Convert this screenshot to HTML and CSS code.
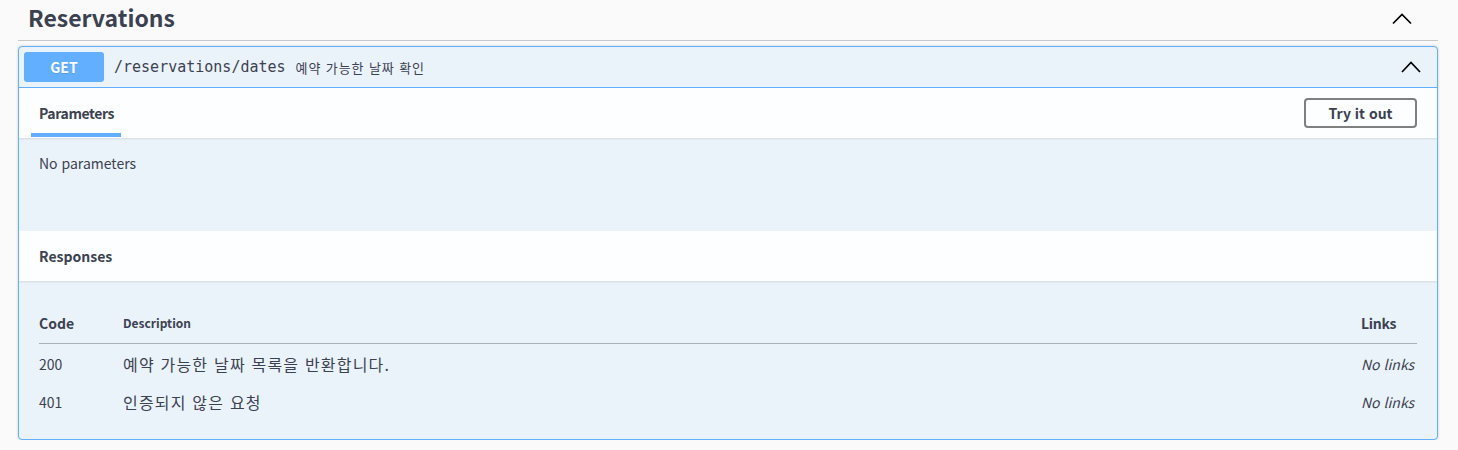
FILE: index.html
```html
<!DOCTYPE html>
<html lang="ko">
<head>
<meta charset="utf-8">
<title>Reservations</title>
<link rel="stylesheet" href="styles.css">
</head>
<body>
<div class="wrap">
  <section class="tag-section">
    <h3 class="tag-heading">
      <span class="tag-title">Reservations</span>
      <svg class="chev chev-tag" viewBox="0 0 20 20" width="20" height="20"><polyline points="1,14.5 10,5.5 19,14.5" fill="none" stroke="#000" stroke-width="1.7"/></svg>
    </h3>
    <div class="opblock">
      <div class="summary">
        <span class="method">GET</span>
        <span class="path">/reservations/dates</span>
        <span class="summary-desc">예약 가능한 날짜 확인</span>
        <svg class="chev chev-op" viewBox="0 0 20 20" width="20" height="20"><polyline points="1,15 10,5.5 19,15" fill="none" stroke="#000" stroke-width="1.7"/></svg>
      </div>
      <div class="section-header">
        <div class="tab">Parameters</div>
        <button class="try-out">Try it out</button>
      </div>
      <div class="params-body">
        <p class="no-params">No parameters</p>
      </div>
      <div class="section-header">
        <h4 class="resp-title">Responses</h4>
      </div>
      <div class="responses-inner">
        <table class="responses-table">
          <thead>
            <tr>
              <th class="col-code">Code</th>
              <th class="col-desc">Description</th>
              <th class="col-links">Links</th>
            </tr>
          </thead>
          <tbody>
            <tr>
              <td class="code">200</td>
              <td class="desc">예약 가능한 날짜 목록을 반환합니다.</td>
              <td class="links">No links</td>
            </tr>
            <tr>
              <td class="code">401</td>
              <td class="desc">인증되지 않은 요청</td>
              <td class="links">No links</td>
            </tr>
          </tbody>
        </table>
      </div>
    </div>
  </section>
</div>
</body>
</html>
```

FILE: styles.css
```css
* { box-sizing: border-box; }

html, body {
  margin: 0;
  padding: 0;
  background: #fafafa;
}

body {
  font-family: "Noto Sans CJK KR", "Noto Sans", sans-serif;
  color: #3b4151;
}

.wrap {
  padding: 0 20px 0 18px;
}

.tag-heading {
  margin: 0;
  height: 41px;
  display: flex;
  align-items: center;
  justify-content: space-between;
  padding: 0 26px 6px 10px;
  border-bottom: 1px solid #c6c8cc;
  font-size: 23px;
  line-height: 30px;
  font-weight: 700;
  color: #3b4151;
}

.chev {
  display: block;
  flex: none;
}

.chev-tag {
  margin-top: 4px;
}

.opblock {
  margin-top: 5px;
  border: 1px solid #61affe;
  border-radius: 4px;
  background: #ebf3fa;
  box-shadow: 0 0 3px rgba(0, 0, 0, 0.19);
  overflow: hidden;
}

.summary {
  display: flex;
  align-items: center;
  padding: 5px;
  border-bottom: 1px solid #61affe;
}

.method {
  width: 80px;
  height: 30px;
  line-height: 30px;
  text-align: center;
  background: #61affe;
  color: #fff;
  font-size: 14px;
  font-weight: 700;
  border-radius: 3px;
  text-shadow: 0 1px 0 rgba(0, 0, 0, 0.1);
}

.path {
  padding: 0 10px;
  font-family: "DejaVu Sans Mono", "Liberation Mono", monospace;
  font-size: 15px;
  color: #3b4151;
}

.summary-desc {
  flex: 1;
  font-size: 13px;
  letter-spacing: 0.9px;
  color: #3b4151;
}

.chev-op {
  margin-right: 11px;
}

.section-header {
  height: 50px;
  display: flex;
  align-items: center;
  justify-content: space-between;
  padding: 0 20px;
  background: rgba(255, 255, 255, 0.85);
  box-shadow: 0 1px 2px rgba(0, 0, 0, 0.1);
  position: relative;
}

.tab {
  position: relative;
  height: 50px;
  display: flex;
  align-items: center;
  font-size: 14px;
  font-weight: 700;
  letter-spacing: -0.4px;
}

.tab::after {
  content: "";
  position: absolute;
  left: -8px;
  right: -7px;
  bottom: 1px;
  height: 4px;
  background: #61affe;
}

.try-out {
  width: 113px;
  height: 30px;
  border: 2px solid #808080;
  border-radius: 4px;
  background: transparent;
  font-family: inherit;
  font-size: 14px;
  font-weight: 700;
  color: #3b4151;
  padding: 0;
}

.params-body {
  height: 93px;
  padding: 15px 20px;
}

.no-params {
  margin: 0;
  font-size: 14px;
  line-height: 20px;
}

.resp-title {
  margin: 0;
  font-size: 14px;
  font-weight: 700;
}

.responses-inner {
  padding: 20px 20px 19px;
}

.responses-table {
  width: 100%;
  border-collapse: collapse;
}

.responses-table th {
  text-align: left;
  padding: 12px 0 10px;
  line-height: 20px;
  font-weight: 700;
  border-bottom: 1px solid #aab0bb;
  font-size: 14px;
}

.responses-table th.col-desc {
  font-size: 12px;
}

.col-code {
  width: 84px;
}

.col-links {
  width: 56px;
}

.responses-table th.col-links {
  letter-spacing: -0.3px;
}

.responses-table td {
  padding: 10px 0 8px;
  line-height: 20px;
  vertical-align: middle;
}

.code {
  font-size: 14px;
}

.desc {
  font-size: 16px;
  letter-spacing: 1.2px;
}

.links {
  font-size: 14px;
  font-style: italic;
  white-space: nowrap;
}
```
